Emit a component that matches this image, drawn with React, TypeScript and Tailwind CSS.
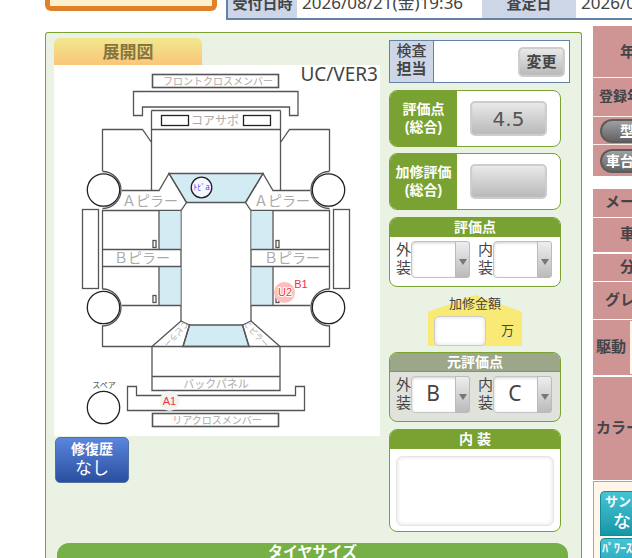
import type { ReactNode } from "react";

const panelBox = "w-[172px] overflow-hidden rounded-lg border border-[#7aa233]";
const labelFont = "font-['Liberation_Sans','Noto_Sans_CJK_JP',sans-serif]";
const greyButton =
  "rounded-[5px] border-2 border-[#cdcdcd] bg-linear-to-b from-[#e9e9e9] to-[#b9b9b9] shadow-[inset_0_-2px_1px_#bdbdbd]";

function HalfBody() {
  return (
    <g>
      <path d="M102.500 171V129.500H142.500L151.500 142.500M151.500 190V110.500" />
      <path d="M122 190.500H159L169 173.500L186.500 202.500L181 210.500H102.500V289M181 210.500V321" />
      <rect x="159.500" y="211" width="21" height="38" fill="#d3ecf4" stroke="none" />
      <rect x="159.500" y="267" width="21" height="38" fill="#d3ecf4" stroke="none" />
      <path d="M159 210.500V249.500M159 266.500V305M102.500 249.500H181M102.500 266.500H181M122 305.500H181" />
      <rect x="153" y="240.500" width="3" height="7" />
      <rect x="153" y="295.500" width="3" height="7" />
      <rect x="82.500" y="209.500" width="16" height="79" />
      <path d="M102.500 171.500A18.500 18.500 0 0 1 102.500 208.500M102.500 289A18.500 18.500 0 0 1 102.500 326V346.500H216" />
      <circle cx="103.500" cy="190" r="16.200" fill="#fff" stroke="#222" />
      <circle cx="103.500" cy="307.500" r="16.200" fill="#fff" stroke="#222" />
      <path d="M152 346.500L181 321L189.500 325L183 346.500M152 346.500V390.500H216M152 376.500H216" />
    </g>
  );
}

function CarDiagram() {
  return (
    <svg
      viewBox="54 65 326 371"
      className="block h-[371px] w-[326px] bg-white font-['Noto_Sans','Noto_Sans_CJK_JP',sans-serif]"
      role="img"
      aria-label="展開図"
    >
      <g fill="none" stroke="#555" strokeWidth="1.300">
        <path d="M169 173.500H263L245.500 202.500H186.500Z" fill="#d3ecf4" />
        <path d="M189.500 325H242.500L249 346.500H183Z" fill="#d3ecf4" />
        <rect x="152.500" y="74.500" width="126" height="13" strokeWidth="1.600" />
        <path d="M133.500 91.500H298V115.500H289.500V107H142.500V115.500H133.500Z" />
        <path d="M151.500 110.500H280.500M151.500 129.500H280.500" />
        <rect x="161.500" y="115.500" width="27" height="10" stroke="#222" />
        <rect x="243.500" y="115.500" width="27" height="10" stroke="#222" />
        <HalfBody />
        <g transform="translate(432 0) scale(-1 1)">
          <HalfBody />
        </g>
        <path d="M127.500 386.500H136.500V395.500H295.500V386.500H304.500V410.500H127.500Z" />
        <rect x="152.500" y="413.500" width="126" height="13" strokeWidth="1.600" />
        <circle cx="103.500" cy="407.500" r="16.200" stroke="#222" />
      </g>
      <g fill="#aaa" textAnchor="middle">
        <text x="218" y="85" fontSize="10">フロントクロスメンバー</text>
        <text x="215" y="125" fontSize="12">コアサポ</text>
        <text x="150" y="206" fontSize="14">Ａピラー</text>
        <text x="282" y="206" fontSize="14">Ａピラー</text>
        <text x="142" y="263" fontSize="14">Ｂピラー</text>
        <text x="292" y="263" fontSize="14">Ｂピラー</text>
        <text x="216" y="388" fontSize="11">バックパネル</text>
        <text x="217" y="424" fontSize="10">リアクロスメンバー</text>
        <text x="104" y="388" fontSize="8" fill="#555">スペア</text>
        <text transform="translate(174 332) rotate(133)" fontSize="8">Ｃピラー</text>
        <text transform="translate(254 336) rotate(47)" fontSize="8">Ｃピラー</text>
      </g>
      <text x="378" y="81" fontSize="19" textAnchor="end" fill="#444">UC/VER3</text>
      <circle cx="201.500" cy="187.500" r="10.300" fill="#f7f8ff" stroke="#222" strokeWidth="1.300" />
      <text x="201.500" y="190" fontSize="8" textAnchor="middle" fill="#4a3cf0">ﾄﾋﾞa</text>
      <circle cx="169.500" cy="401" r="10" fill="#f3f3f3" />
      <circle cx="284.500" cy="292.500" r="10.500" fill="#ffbdbd" />
      <g
        className="font-['Liberation_Sans',Arial,sans-serif]"
        fontSize="11"
        textAnchor="middle"
        fill="#f0323c"
      >
        <text x="169.500" y="405">A1</text>
        <text x="285" y="296" stroke="#fff" strokeWidth="2" paintOrder="stroke">U2</text>
        <text x="301" y="288">B1</text>
      </g>
    </svg>
  );
}

function GradeSelect({ id, label, value }: { id: string; label: string; value: string }) {
  return (
    <div className="flex">
      <label htmlFor={id} className={`w-[15px] text-[15px] leading-[18px] ${labelFont}`}>
        {label}
      </label>
      <div className="relative">
        <select
          id={id}
          defaultValue={value}
          className="block h-[37px] w-[59px] appearance-none rounded-[4px] border border-[#c4c4c4] bg-white pr-[15px] pb-1 text-center text-[21px] leading-5 text-[#444] shadow-[inset_0_1px_3px_#ccc]"
        >
          <option value={value}>{value}</option>
        </select>
        <span className="pointer-events-none absolute inset-y-0 right-0 flex w-[15px] items-center justify-center rounded-r-[3px] border border-[#bbb] bg-linear-to-b from-[#eee] to-[#bbb]">
          <svg viewBox="0 0 8 6" className="mt-1 h-[6px] w-[8px]">
            <path d="M0 0H8L4 6Z" fill="#777" />
          </svg>
        </span>
      </div>
    </div>
  );
}

function GradeBox({ title, muted, prefix, values }: { title: string; muted?: boolean; prefix: string; values: string[] }) {
  return (
    <section className={`${panelBox} ${muted ? "mb-px bg-[#e0e3dc]" : "bg-white"}`}>
      <h2
        className={`border-b border-[#7aa233] text-center text-[14px] leading-[18px] font-bold text-white ${labelFont} ${
          muted ? "bg-[#9ba788]" : "bg-[#7aa233]"
        }`}
      >
        {title}
      </h2>
      <div className="flex gap-2 px-[6px] pt-1 pb-2">
        <GradeSelect id={`${prefix}-exterior`} label="外装" value={values[0]} />
        <GradeSelect id={`${prefix}-interior`} label="内装" value={values[1]} />
      </div>
    </section>
  );
}

function TotalScore({ title, value }: { title: string; value: string }) {
  return (
    <section className={`${panelBox} flex h-[57px] bg-white`}>
      <h2
        className={`flex w-[67px] flex-col justify-center bg-[#7aa233] pb-[2px] text-center text-[14px] leading-[18px] font-bold text-white ${labelFont}`}
      >
        <span>{title}</span>
        <span>(総合)</span>
      </h2>
      <div className="flex flex-1 items-center justify-center">
        <button
          type="button"
          aria-label={title}
          className={`${greyButton} h-[35px] w-[77px] font-['DejaVu_Sans',sans-serif] text-[20px] leading-5 text-[#555]`}
        >
          {value}
        </button>
      </div>
    </section>
  );
}

function SideRow({ className, children }: { className: string; children: ReactNode }) {
  return (
    <div className={`flex shrink-0 items-center overflow-hidden bg-[#cf9595] whitespace-nowrap ${className}`}>
      {children}
    </div>
  );
}

const pill =
  "flex h-6 flex-1 items-center rounded-l-full border-2 border-r-0 border-[#5c5c5c] bg-linear-to-b from-[#a0a0a0] to-[#636363] text-[14px] leading-5 font-bold text-white";
const tealButton =
  "flex w-full flex-col items-start overflow-hidden rounded-tl-[5px] border border-r-0 border-[#148a9c] bg-linear-to-b from-[#45c5d4] to-[#1596a8] text-left whitespace-nowrap text-white";

function SideColumn() {
  return (
    <aside
      className={`flex min-w-0 flex-1 flex-col overflow-hidden pt-[6px] text-[15px] leading-5 font-bold text-[#444] ${labelFont}`}
    >
      <div className="flex flex-col gap-px bg-[#fff2e8]">
        <SideRow className="h-[51px] pl-[27px]">年</SideRow>
        <SideRow className="h-[38px] pb-[2px] pl-[6px] text-[14px]">登録年</SideRow>
        <SideRow className="h-[27px] pl-[7px]">
          <a href="#model" className={`${pill} pl-[18px] underline`}>型</a>
        </SideRow>
        <SideRow className="h-[31px] pl-[7px]">
          <a href="#chassis" className={`${pill} pl-1`}>車台</a>
        </SideRow>
      </div>
      <div className="mt-[13px] flex flex-col gap-px">
        <SideRow className="h-[28px] pb-[2px] pl-3">メー</SideRow>
        <SideRow className="h-[34px] pb-[2px] pl-[27px]">車</SideRow>
        <SideRow className="mt-px h-[27px] pb-[2px] pl-[27px]">分</SideRow>
        <SideRow className="h-[37px] pb-[2px] pl-3">グレ</SideRow>
        <SideRow className="h-[55px] pl-[3px]">
          <span className="w-[34px] shrink-0 pb-[2px]">駆動</span>
          <span className="h-[53px] flex-1 bg-[#fff5e8]" />
        </SideRow>
        <SideRow className="mt-px h-[103px] pb-[2px] pl-[3px]">カラー</SideRow>
        <div className="flex flex-col gap-[2px] border border-r-0 border-[#cf9595] bg-[#fff5e8] pt-[9px] pb-2 pl-[6px]">
          <button type="button" className={`${tealButton} h-[45px] pl-1`}>
            <span className="text-[13px] leading-5 font-bold">サンル</span>
            <span className="pl-2 text-[18px] leading-5 font-medium">な</span>
          </button>
          <button type="button" className={`${tealButton} h-[45px] pl-px`}>
            <span className="text-[12px] leading-5 font-bold">ﾊﾟﾜｰｽﾃ</span>
          </button>
        </div>
      </div>
    </aside>
  );
}

export default function App() {
  return (
    <div className="flex h-screen flex-col overflow-hidden bg-white font-['Noto_Sans','Noto_Sans_CJK_JP',sans-serif] text-[#444]">
      <header className="flex h-5 shrink-0 pl-[45px]">
        <div className="mr-[9px] h-[11px] w-[172px] shrink-0 rounded-b-md border-[5px] border-t-0 border-[#e0802a] bg-[#fdf0cc]" />
        <dl className="flex min-w-0 flex-1 items-stretch overflow-hidden border-b-2 border-l-2 border-[#6482a5] text-[15px] leading-5 whitespace-nowrap">
          <dt className="flex w-[69px] shrink-0 items-end justify-center bg-[#cdd6e6] pb-[5px] font-bold">受付日時</dt>
          <dd className="flex w-[185px] shrink-0 items-end pb-[5px] pl-[5px] text-[17px]">2026/08/21(金)19:36</dd>
          <dt className="flex w-[94px] shrink-0 items-end justify-center bg-[#cdd6e6] pb-[5px] font-bold">査定日</dt>
          <dd className="flex items-end pb-[5px] pl-[5px] text-[17px]">2026/0</dd>
        </dl>
      </header>

      <div className="flex flex-1 pl-[45px]">
        <main className="mt-3 mr-[11px] w-[537px] shrink-0 rounded-t-[3px] border border-b-0 border-[#7aa233] bg-[#eaf3e3] px-2 pt-[5px]">
          <div className="flex gap-[9px]">
            <section className="w-[326px] shrink-0">
              <h1 className="w-[148px] rounded-t-md bg-linear-to-b from-[#efe88f] to-[#fac578] text-center text-[17px] leading-[27px] font-bold text-[#857640]">
                展開図
              </h1>
              <CarDiagram />
              <button
                type="button"
                className="mt-px ml-px block h-[46px] w-[74px] rounded-[5px] border border-[#5470a0] bg-linear-to-b from-[#5b86dc] to-[#2a4fa0] pb-[2px] text-white"
              >
                <span className="block text-[14px] leading-[18px] font-bold">修復歴</span>
                <span className="block text-[17px] leading-5">なし</span>
              </button>
            </section>

            <section className="flex flex-col gap-[6px] pt-[2px]">
              <div className="mb-px flex h-[43px] w-[181px] border border-[#6482a5] bg-white">
                <div
                  className={`flex w-[44px] flex-col justify-center border-r border-[#6482a5] bg-[#cdd6e6] pb-1 text-center text-[15px] leading-[18px] font-bold ${labelFont}`}
                >
                  <span className="font-medium">検査</span>
                  <span>担当</span>
                </div>
                <div className="flex flex-1 items-center justify-end pr-1">
                  <button
                    type="button"
                    className={`${greyButton} h-[30px] w-[47px] pb-[2px] text-[15px] leading-5 font-bold`}
                  >
                    変更
                  </button>
                </div>
              </div>
              <TotalScore title="評価点" value="4.5" />
              <TotalScore title="加修評価" value="" />
              <div className="mt-px">
                <GradeBox title="評価点" prefix="grade" values={["", ""]} />
              </div>
              <div className="relative isolate mt-[2px] ml-[39px] h-[51px] w-[94px] px-[6px] before:absolute before:inset-0 before:-z-10 before:bg-[#f9ea76] before:[clip-path:polygon(50%_0,100%_33%,100%_100%,0_100%,0_33%)]">
                <label
                  htmlFor="repair-cost"
                  className={`block pt-px pb-1 text-center text-[13px] leading-4 ${labelFont}`}
                >
                  加修金額
                </label>
                <div className="flex items-center gap-[15px]">
                  <input
                    id="repair-cost"
                    className="h-[30px] w-[52px] rounded-[5px] border border-[#ccc] bg-white shadow-[inset_0_0_4px_#ddd]"
                  />
                  <span className={`text-[13px] leading-5 ${labelFont}`}>万</span>
                </div>
              </div>
              <GradeBox title="元評価点" muted prefix="original" values={["B", "C"]} />
              <section className={`${panelBox} bg-white`}>
                <h2
                  className={`bg-[#7aa233] text-center text-[14px] leading-[19px] font-bold text-white ${labelFont}`}
                >
                  <label htmlFor="interior">内 装</label>
                </h2>
                <div className="px-[6px] pt-[7px] pb-[5px]">
                  <textarea
                    id="interior"
                    className="block h-[70px] w-full resize-none rounded-md border border-[#e5e5e5] shadow-[inset_0_0_4px_#ddd]"
                  />
                </div>
              </section>
            </section>
          </div>
          <h2 className="mt-[11px] mr-[5px] ml-[3px] h-6 rounded-t-xl bg-[#76b047] text-center text-[15px] leading-4 font-bold text-white">
            タイヤサイズ
          </h2>
        </main>
        <SideColumn />
      </div>
    </div>
  );
}
